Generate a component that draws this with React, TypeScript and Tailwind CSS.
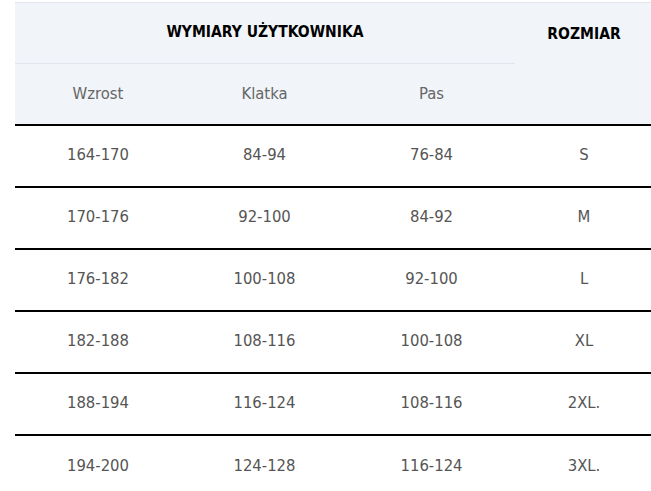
import React from 'react';

const rows: string[][] = [
  ['164-170', '84-94', '76-84', 'S'],
  ['170-176', '92-100', '84-92', 'M'],
  ['176-182', '100-108', '92-100', 'L'],
  ['182-188', '108-116', '100-108', 'XL'],
  ['188-194', '116-124', '108-116', '2XL.'],
  ['194-200', '124-128', '116-124', '3XL.'],
];

const App: React.FC = () => {
  return (
    <div
      className="w-[651px] h-[491px] overflow-hidden bg-white pl-[15px] pt-[2px]"
      style={{ fontFamily: '"DejaVu Sans Condensed", "DejaVu Sans", sans-serif' }}
    >
      <table className="w-[638px] border-collapse table-fixed">
        <colgroup>
          <col className="w-[166px]" />
          <col className="w-[167px]" />
          <col className="w-[167px]" />
          <col className="w-[138px]" />
        </colgroup>
        <thead className="bg-[#f1f5f9]">
          <tr className="border-t border-[#e2e6ec]">
            <th
              colSpan={3}
              className="h-[61px] border-b border-[#e2e6ec] text-center align-middle text-[15.5px] font-bold text-black"
            >
              WYMIARY UŻYTKOWNIKA
            </th>
            <th rowSpan={2} className="pt-[20px] align-top text-center text-[15.5px] font-bold text-black">
              ROZMIAR
            </th>
          </tr>
          <tr className="border-b-2 border-black">
            <th className="h-[61px] pt-[2px] text-center align-middle text-[16.5px] font-normal text-[#666]">Wzrost</th>
            <th className="pt-[2px] text-center align-middle text-[16.5px] font-normal text-[#666]">Klatka</th>
            <th className="pt-[2px] text-center align-middle text-[16.5px] font-normal text-[#666]">Pas</th>
          </tr>
        </thead>
        <tbody>
          {rows.map((r, i) => (
            <tr key={i} className={i < rows.length - 1 ? 'border-b-2 border-black' : ''}>
              {r.map((c, j) => (
                <td key={j} className="h-[62px] text-center align-middle text-[16.5px] text-[#555]">
                  {c}
                </td>
              ))}
            </tr>
          ))}
        </tbody>
      </table>
    </div>
  );
};

export default App;
